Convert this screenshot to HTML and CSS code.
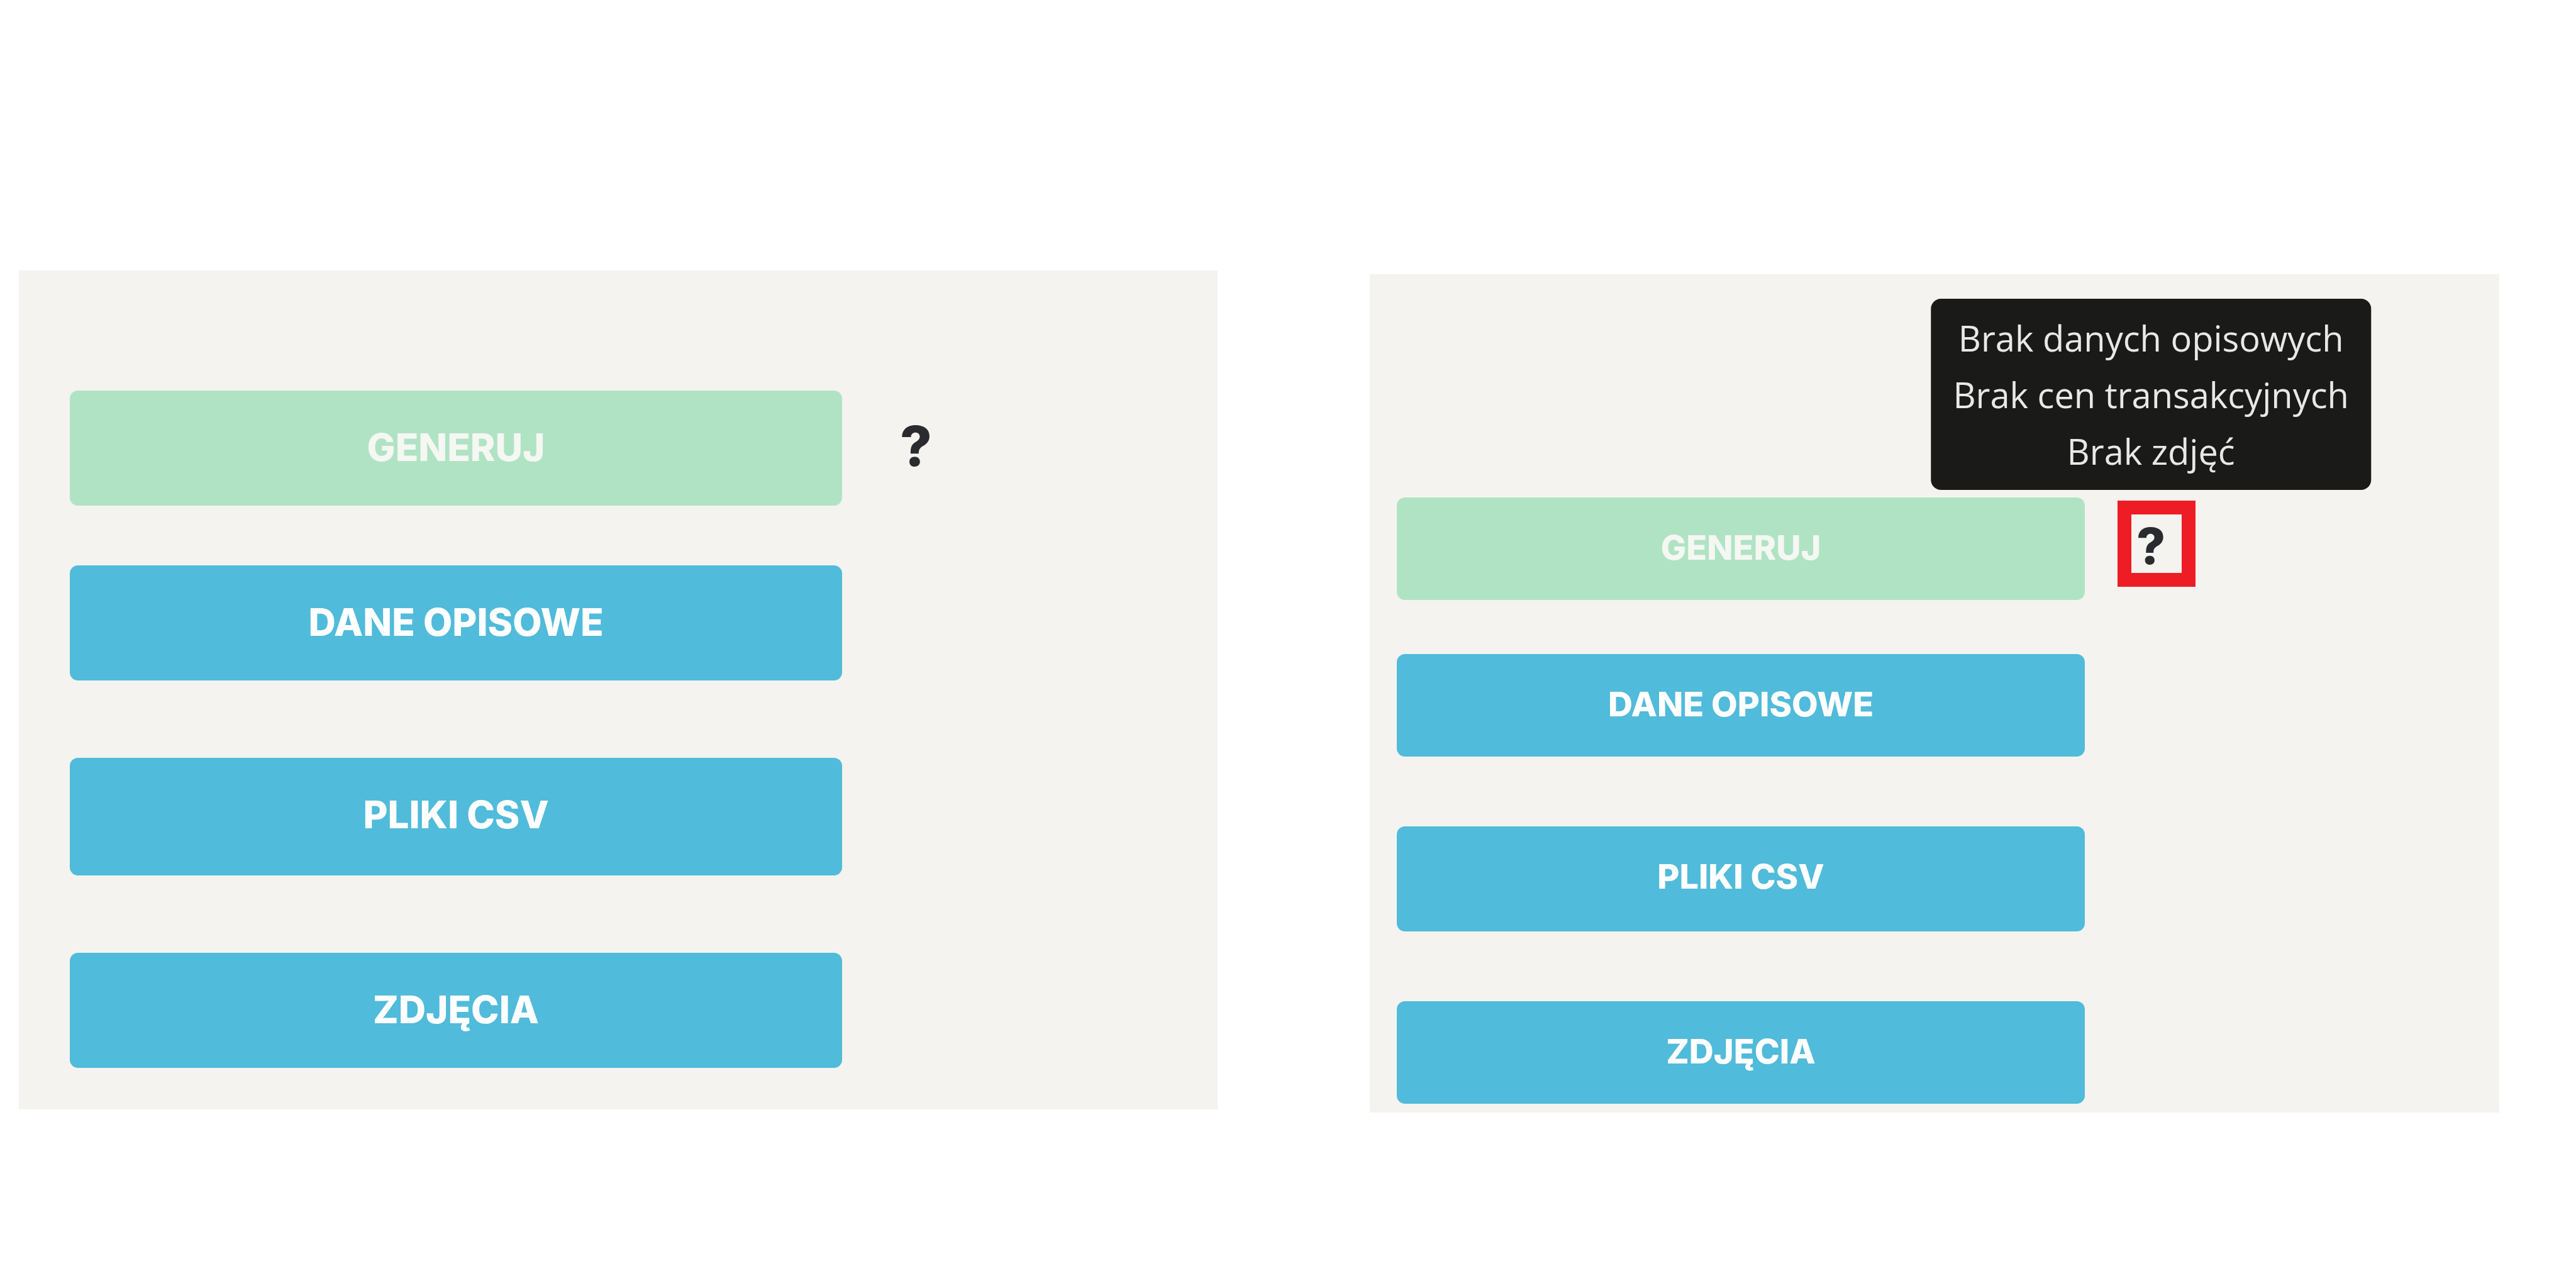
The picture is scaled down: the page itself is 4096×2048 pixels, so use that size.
FILE: index.html
```html
<!DOCTYPE html>
<html lang="pl">
<head>
  <meta charset="utf-8">
  <title>Generuj</title>
  <link rel="stylesheet" href="styles.css">
</head>
<body>
  <main class="page">
    <section class="panel">
      <div class="row">
        <button class="button button--generate" type="button" disabled>GENERUJ</button>
        <div class="help">
          <button class="help__button" type="button">?</button>
        </div>
      </div>
      <div class="stack">
        <button class="button" type="button">DANE OPISOWE</button>
        <button class="button button--tall" type="button">PLIKI CSV</button>
        <button class="button" type="button">ZDJĘCIA</button>
      </div>
    </section>

    <section class="panel panel--compact">
      <div class="row">
        <button class="button button--generate" type="button" disabled>GENERUJ</button>
        <div class="help help--marked">
          <div class="help__anchor">
            <button class="help__button" type="button" aria-describedby="missing">?</button>
            <div class="tooltip" id="missing" role="tooltip">
              <div>Brak danych opisowych</div>
              <div>Brak cen transakcyjnych</div>
              <div>Brak zdjęć</div>
            </div>
          </div>
        </div>
      </div>
      <div class="stack">
        <button class="button" type="button">DANE OPISOWE</button>
        <button class="button button--tall" type="button">PLIKI CSV</button>
        <button class="button" type="button">ZDJĘCIA</button>
      </div>
    </section>
  </main>
</body>
</html>
```

FILE: styles.css
```css
* {
  box-sizing: border-box;
}

body {
  margin: 0;
  background: #ffffff;
  font-family: Inter, "Liberation Sans", sans-serif;
}

.page {
  display: grid;
  grid-template-columns: 1906fr 1796fr;
  align-items: start;
  gap: 242px;
  padding: 430px 122px 280px 30px;
}

.panel {
  --columns: 1228fr 597fr;
  --height: 183px;
  --height-tall: 187px;
  --gap: 123px;
  --text: 60px;
  --mark: 88px;
  padding: 191px 0 66px 81px;
  background: #f4f3ef;
}

.panel--compact {
  --columns: 1094fr 659fr;
  --height: 163px;
  --height-tall: 167px;
  --gap: 111px;
  --text: 54px;
  --mark: 80px;
  margin-top: 6px;
  padding: 355px 0 14px 43px;
}

.row,
.stack {
  display: grid;
  grid-template-columns: var(--columns);
}

.row {
  align-items: center;
  margin-bottom: 95px;
}

.panel--compact .row {
  margin-bottom: 86px;
}

.stack {
  row-gap: var(--gap);
}

.button {
  grid-column: 1;
  height: var(--height);
  padding: 0 0 4px;
  border: 0;
  border-radius: 13px;
  background: #50bbda;
  color: #ffffff;
  font: 800 var(--text) / 1 Inter, "Liberation Sans", sans-serif;
  text-align: center;
}

.button--tall {
  height: var(--height-tall);
  padding-bottom: 8px;
}

.button--generate {
  background: #b0e3c4;
  color: #f5f7f3;
}

.help {
  justify-self: start;
  margin-left: 92px;
  padding-bottom: 8px;
}

.help__button {
  display: block;
  padding: 0;
  border: 0;
  background: none;
  color: #292b2e;
  font: 800 var(--mark) / 1 Inter, "Liberation Sans", sans-serif;
}

.help--marked {
  align-self: start;
  margin: 5px 0 0 52px;
  padding: 10px 26px 3px 8px;
  border: 22px solid #ee1c25;
}

.help__anchor {
  position: relative;
}

.tooltip {
  position: absolute;
  bottom: calc(100% + 49px);
  left: 50%;
  padding: 17px 35px;
  border-radius: 16px;
  background: #1a1a18;
  color: #e8e8e8;
  font: 400 56px / 90px "Open Sans", "Noto Sans", sans-serif;
  text-align: center;
  white-space: nowrap;
  transform: translateX(-50%);
}
```
